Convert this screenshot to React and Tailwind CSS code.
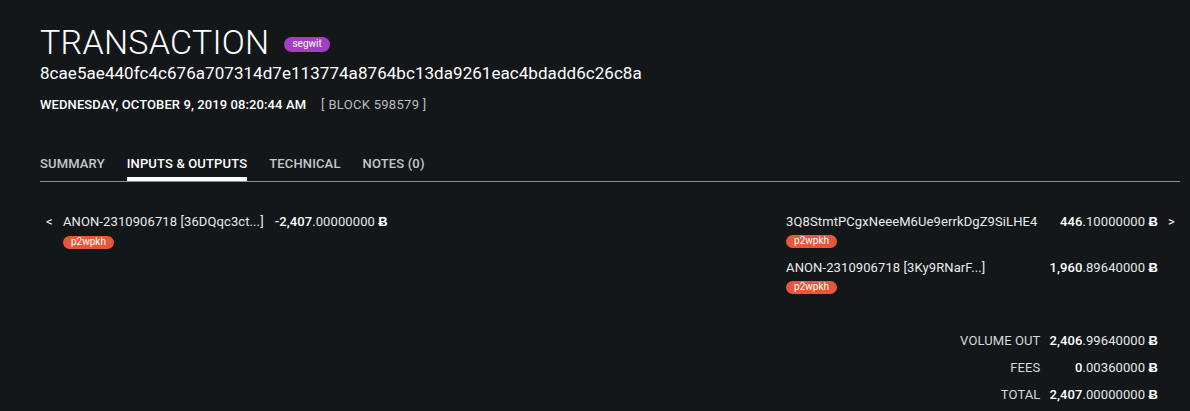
import React from "react";

const Amount = ({ int, dec }) => (
  <span className="whitespace-nowrap">
    <span className="font-medium text-white">{int}</span>
    <span className="text-[#e6e8ea]">.{dec}</span>
    <span className="font-bold text-white"> Ƀ</span>
  </span>
);

const Badge = ({ children }) => (
  <span className="inline-flex h-[13px] items-center rounded-full bg-[#e8573a] px-[8px] text-[10px] leading-none tracking-normal text-white">
    {children}
  </span>
);

export default function App() {
  return (
    <div
      className="min-h-[411px] w-full bg-[#131719] pl-10 pr-[10px] text-[#e9ebec]"
      style={{ fontFamily: "Roboto, 'Liberation Sans', sans-serif" }}
    >
      <div className="pt-[22px]">
        <div className="flex items-center gap-[15px]">
          <h1 className="text-[34px] font-light leading-[40px] tracking-[0.25px] text-white">TRANSACTION</h1>
          <span className="mt-[4px] inline-flex h-[15px] items-center rounded-full bg-[#a23fc2] px-[8px] text-[10px] leading-none text-white">
            segwit
          </span>
        </div>
        <div className="text-[17px] leading-[22px] tracking-[0.05px] text-white">
          8cae5ae440fc4c676a707314d7e113774a8764bc13da9261eac4bdadd6c26c8a
        </div>
        <div className="mt-[14px] flex items-center gap-[15px] text-[13px] leading-[14px] tracking-[0.1px]">
          <span className="font-medium text-white">WEDNESDAY, OCTOBER 9, 2019 08:20:44 AM</span>
          <span className="tracking-[0.3px] text-[#b9bdc0]">[ BLOCK 598579 ]</span>
        </div>
      </div>

      <div className="mt-[44px] flex gap-[22px] border-b border-[#8d9296] text-[13px] font-medium leading-[16px] tracking-[0.15px]">
        <div className="pb-[9px] text-[#c4c8cb]">SUMMARY</div>
        <div className="border-b-4 border-white pb-[5px] text-white">INPUTS &amp; OUTPUTS</div>
        <div className="pb-[9px] text-[#c4c8cb]">TECHNICAL</div>
        <div className="pb-[9px] text-[#c4c8cb]">NOTES (0)</div>
      </div>

      <div className="mt-[32px] flex justify-between text-[13px] leading-[16px] tracking-[0.1px]">
        <div className="flex items-start">
          <span className="w-[23px] pl-[6px] text-white">&lt;</span>
          <div>
            <div className="flex gap-[11px]">
              <span>ANON-2310906718 [36DQqc3ct...]</span>
              <Amount int="-2,407" dec="00000000" />
            </div>
            <div className="mt-[3px]">
              <Badge>p2wpkh</Badge>
            </div>
          </div>
        </div>

        <div className="flex flex-col">
          <div className="flex items-start">
            <div className="grid grid-cols-[auto_auto] gap-x-[12px] gap-y-[12px]">
              <div>
                <div>3Q8StmtPCgxNeeeM6Ue9errkDgZ9SiLHE4</div>
                <div className="mt-[2px]"><Badge>p2wpkh</Badge></div>
              </div>
              <div className="text-right">
                <Amount int="446" dec="10000000" />
              </div>
              <div>
                <div>ANON-2310906718 [3Ky9RNarF...]</div>
                <div className="mt-[2px]"><Badge>p2wpkh</Badge></div>
              </div>
              <div className="text-right">
                <Amount int="1,960" dec="89640000" />
              </div>
            </div>
            <span className="w-[22px] pl-[10px] text-white">&gt;</span>
          </div>

          <div className="mt-[39px] mr-[22px] grid grid-cols-[auto_auto] justify-end gap-x-[9px] gap-y-[11px] text-right">
            <div className="text-[#d6d9db]">VOLUME OUT</div>
            <Amount int="2,406" dec="99640000" />
            <div className="text-[#d6d9db]">FEES</div>
            <Amount int="0" dec="00360000" />
            <div className="text-[#d6d9db]">TOTAL</div>
            <Amount int="2,407" dec="00000000" />
          </div>
        </div>
      </div>
    </div>
  );
}
